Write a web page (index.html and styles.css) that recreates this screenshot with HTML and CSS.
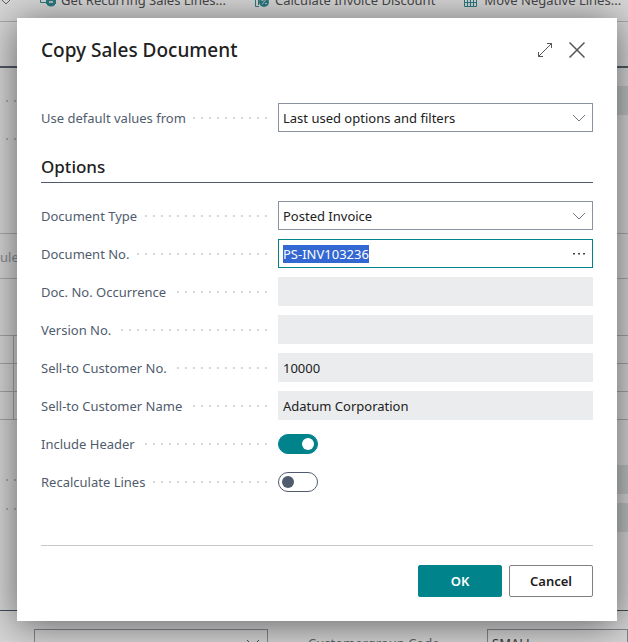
FILE: index.html
```html
<!DOCTYPE html>
<html lang="en">
<head>
<meta charset="utf-8">
<title>Copy Sales Document</title>
<link rel="stylesheet" href="styles.css">
</head>
<body>
<div class="page">
  <div class="actions">
    <svg class="actions-chevron" viewBox="0 0 12 8"><path d="M1 1l5 5 5-5" fill="none" stroke="#777"/></svg>
    <a class="action" href="#"><svg class="action-icon" viewBox="0 0 16 16"><path d="M.5 3v7.500H7" fill="none" stroke="#32939a"/><path d="M6 6h10v6h-1v1q-4 3-8 0v-1H6z" fill="#32939a"/><path d="M9 9h4v2H9z" fill="#ddd"/></svg>Get Recurring Sales Lines...</a>
    <a class="action" href="#"><svg class="action-icon" viewBox="0 0 16 16"><path d="M1.500 2v12.500H5M4.500 3v10" fill="none" stroke="#32939a"/><circle cx="10" cy="10" r="5" fill="#32939a"/><path d="M8 12.500l4-5M7.500 8.500h2M11 11.500h2" stroke="#ddd"/></svg>Calculate Invoice Discount</a>
    <a class="action" href="#"><svg class="action-icon" viewBox="0 0 16 16"><path d="M1.500 2v12.500h12V2M1 6.500h13M1 10.500h13M4.500 3v11M7.500 3v11M10.500 3v11" fill="none" stroke="#32939a"/></svg>Move Negative Lines...</a>
  </div>
  <div class="band"></div>
  <div class="fields">
    <div class="dot-column"><span class="page-dots"></span><span class="page-dots"></span></div>
    <div class="box-column"><span class="page-box"></span></div>
  </div>
  <div class="tab">ule</div>
  <div class="spacer"></div>
  <div class="grid"><div></div><div></div><div></div></div>
  <div class="lower">
    <div class="dot-column dot-column-tight"><span class="page-dots"></span><span class="page-dots"></span></div>
    <div class="box-column"><span class="page-box"></span><span class="page-box"></span></div>
  </div>
  <div class="footer-fields">
    <div class="page-input"><svg class="chevron" viewBox="0 0 12 8"><path d="M0 1l6 6 6-6" fill="none" stroke="#505c6d"/></svg></div>
    <span class="page-label">Customergroup Code</span>
    <div class="page-input page-input-last">SMALL</div>
  </div>
</div>
<div class="overlay">
  <form class="dialog">
    <header class="dialog-head">
      <h1>Copy Sales Document</h1>
      <button class="icon-button" type="button" aria-label="Expand"><svg width="16" height="16" viewBox="0 0 16 16"><path d="M1.500 14.500l13-13M10 1.500h4.500V6M1.500 10v4.500H6" fill="none" stroke="#555"/></svg></button>
      <button class="icon-button" type="button" aria-label="Close"><svg width="16" height="16" viewBox="0 0 16 16"><path d="M.5.5l15 15M15.500.5l-15 15" fill="none" stroke="#555" stroke-width="1.500"/></svg></button>
    </header>
    <div class="row">
      <label for="defaults">Use default values from</label><span class="dots"></span>
      <div class="control"><select id="defaults"><option>Last used options and filters</option></select><svg class="chevron" viewBox="0 0 12 8"><path d="M0 1l6 6 6-6" fill="none" stroke="#6f7987"/></svg></div>
    </div>
    <h2>Options</h2>
    <div class="rows">
      <div class="row"><label for="type">Document Type</label><span class="dots"></span>
        <div class="control"><select id="type"><option>Posted Invoice</option></select><svg class="chevron" viewBox="0 0 12 8"><path d="M0 1l6 6 6-6" fill="none" stroke="#6f7987"/></svg></div></div>
      <div class="row"><label for="number">Document No.</label><span class="dots"></span>
        <div class="control"><input class="active" id="number" type="text" value="PS-INV103236" autofocus><button class="lookup" type="button" aria-label="Look up"><svg width="12" height="2" viewBox="0 0 12 2"><path d="M0 0h2v1.500H0zM5 0h2v1.500H5zM10 0h2v1.500h-2z" fill="#444"/></svg></button></div></div>
      <div class="row"><label for="occurrence">Doc. No. Occurrence</label><span class="dots"></span>
        <div class="control"><input id="occurrence" type="text" readonly></div></div>
      <div class="row"><label for="version">Version No.</label><span class="dots"></span>
        <div class="control"><input id="version" type="text" readonly></div></div>
      <div class="row"><label for="customer">Sell-to Customer No.</label><span class="dots"></span>
        <div class="control"><input id="customer" type="text" value="10000" readonly></div></div>
      <div class="row"><label for="name">Sell-to Customer Name</label><span class="dots"></span>
        <div class="control"><input id="name" type="text" value="Adatum Corporation" readonly></div></div>
      <div class="row"><label for="header">Include Header</label><span class="dots"></span>
        <div class="control"><input class="switch" id="header" type="checkbox" checked></div></div>
      <div class="row"><label for="recalc">Recalculate Lines</label><span class="dots"></span>
        <div class="control"><input class="switch" id="recalc" type="checkbox"></div></div>
    </div>
    <footer class="dialog-foot">
      <button class="button primary" type="button">OK</button>
      <button class="button" type="button">Cancel</button>
    </footer>
  </form>
</div>
<script src="app.js"></script>
</body>
</html>
```
FILE: styles.css
```css
* { box-sizing: border-box; }
body {
  margin: 0;
  min-height: 100vh;
  overflow: hidden;
  font: 13px/20px "Segoe UI", "Noto Sans", sans-serif;
  color: #212121;
}
.page {
  position: absolute;
  inset: 0;
  overflow: hidden;
  background: #fff;
  color: #6b7582;
}
.actions {
  display: flex;
  gap: 28px;
  height: 22px;
  border-bottom: 1px solid #ccc;
}
.actions-chevron { flex: none; width: 12px; height: 8px; margin-top: -2px; }
.action {
  display: flex;
  align-items: center;
  gap: 5px;
  height: 20px;
  margin-top: -10px;
  color: #555;
  text-decoration: none;
  white-space: nowrap;
}
.action-icon { width: 16px; height: 16px; }
.band { height: 46px; border-bottom: 2px solid #626c7b; }
.fields, .lower { display: flex; justify-content: space-between; }
.fields { height: 165px; padding-top: 18px; }
.dot-column { display: grid; gap: 36px; align-content: start; padding: 14px 0 0 6px; }
.dot-column-tight { gap: 27px; }
.box-column { display: grid; gap: 9px; align-content: start; }
.page-dots {
  width: 12px;
  height: 2px;
  background: repeating-linear-gradient(90deg, #ccc 0 2px, transparent 2px 8px);
}
.page-box { width: 14px; height: 29px; background: #e4e6e8; }
.tab {
  height: 46px;
  padding: 13px 0;
  border: solid #ccc;
  border-width: 1px 0;
  color: #a0a8b4;
}
.spacer { height: 56px; }
.grid { border-top: 1px solid #c4c4c4; }
.grid div { height: 28px; border-bottom: 1px solid #c4c4c4; background: linear-gradient(#c4c4c4, #c4c4c4) 13px 0 / 1px 100% no-repeat; }
.lower { height: 191px; padding-top: 45px; border-bottom: 1px solid #505c6d; }
.footer-fields { display: grid; grid-template-columns: 234px 1fr 141px; padding: 18px 0 0 34px; }
.page-input {
  position: relative;
  height: 29px;
  padding: 3px 4px;
  border: 1px solid #9a9fa9;
}
.page-input-last { color: #444; }
.page-label { padding: 4px 40px; white-space: nowrap; }

.overlay {
  position: absolute;
  inset: 0;
  padding: 18px 11px 21px 17px;
  background: rgba(0, 0, 0, .16);
}
.dialog {
  padding: 16px 24px 24px;
  background: #fff;
  box-shadow: 0 4px 36px rgba(0, 0, 0, .55);
}
.dialog-head { display: flex; align-items: center; gap: 16px; height: 31px; }
h1 { flex: 1; margin: 0; font-size: 19px; line-height: 32px; font-weight: 500; }
.icon-button {
  display: flex;
  padding: 0;
  border: 0;
  background: none;
}
.icon-button:last-child { margin-right: 8px; }
.row {
  display: grid;
  grid-template-columns: auto 1fr minmax(0, 315px);
  align-items: center;
  height: 29px;
}
.dialog-head + .row { margin-top: 38px; }
label { color: #505c6d; white-space: nowrap; }
.dots {
  height: 2px;
  margin: 0 11px 0 6px;
  background: repeating-linear-gradient(270deg, #d4d6d9 0 2px, transparent 2px 8px);
}
.control { position: relative; display: flex; }
select, input[type="text"] {
  width: 100%;
  height: 29px;
  padding: 0 4px;
  border: 1px solid #8b93a1;
  border-radius: 0;
  outline: 0;
  appearance: none;
  background: #fff;
  color: #212121;
  font: inherit;
}
input[type="text"]:read-only { border-color: #ebecee; background: #ebecee; }
input.active { border-color: #00838a; }
input::selection { background: #3367d1; color: #fff; }
.chevron { position: absolute; top: 11px; right: 8px; width: 12px; height: 8px; pointer-events: none; }
.page-input .chevron { top: 9px; }
.lookup {
  position: absolute;
  top: 14px;
  right: 8px;
  display: flex;
  padding: 0;
  border: 0;
  background: none;
}
h2 {
  margin: 23px 0 18px;
  padding-bottom: 3px;
  border-bottom: 1px solid #505c6d;
  font-size: 17px;
  line-height: 24px;
  font-weight: 500;
}
.rows { display: grid; gap: 9px; }
.switch {
  appearance: none;
  display: flex;
  align-items: center;
  width: 40px;
  height: 20px;
  margin: 0;
  padding: 0 3px;
  border: 1px solid #505c6d;
  border-radius: 10px;
}
.switch::before { content: ""; width: 12px; height: 12px; border-radius: 50%; background: #505c6d; }
.switch:checked { justify-content: flex-end; border-color: #00838a; background: #00838a; }
.switch:checked::before { background: #fff; }
.dialog-foot {
  display: flex;
  justify-content: flex-end;
  gap: 7px;
  margin-top: 49px;
  padding-top: 19px;
  border-top: 1px solid #c8c8c8;
}
.button {
  width: 84px;
  height: 32px;
  padding: 0;
  border: 1px solid #808080;
  border-radius: 2px;
  background: #fff;
  color: #212121;
  font: inherit;
  font-weight: 600;
}
.primary { border-color: #00838a; background: #00838a; color: #fff; }
```
FILE: app.js
```js
document.getElementById("number").select();
```
